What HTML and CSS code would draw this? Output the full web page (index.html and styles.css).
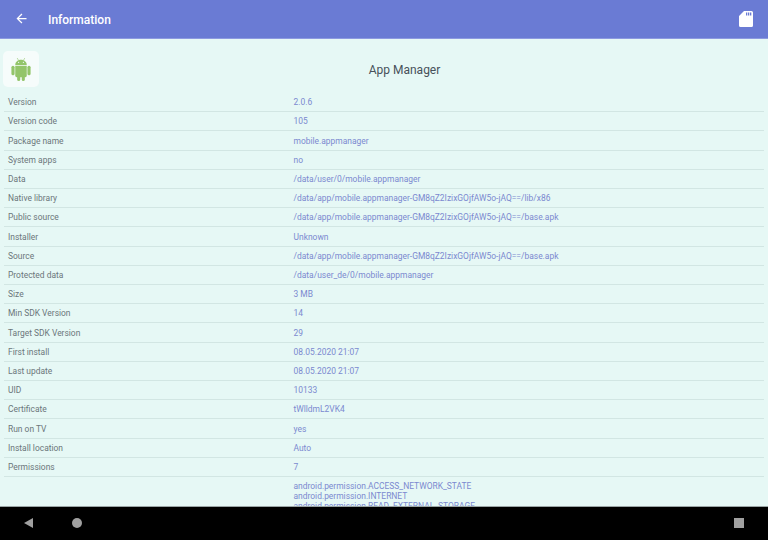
FILE: index.html
```html
<!DOCTYPE html>
<html lang="en">
<head>
<meta charset="utf-8">
<title>Information</title>
<link rel="stylesheet" href="styles.css">
</head>
<body>
<div class="screen">
  <header class="appbar">
    <svg class="back" viewBox="0 0 24 24" width="15" height="15"><path d="M20 11H7.830l5.590-5.590L12 4l-8 8 8 8 1.410-1.410L7.830 13H20z" fill="#fff"/></svg>
    <h1 class="title">Information</h1>
    <svg class="sd" viewBox="0 0 14 18" width="14" height="18"><path d="M5 1h7.500A1.500 1.500 0 0 1 14 2.500v13a1.500 1.500 0 0 1-1.500 1.500h-11A1.500 1.500 0 0 1 0 15.500V6z" fill="#fff"/><path d="M7 2.500h1.300v3H7zM9 2.500h1.300v3H9zM11 2.500h1.300v3H11z" fill="#6a7bd4"/></svg>
  </header>
  <main class="content">
    <div class="app-head">
      <div class="icon-box">
        <svg viewBox="0 0 20 24" width="20" height="24"><g fill="#93c56a"><rect x="0" y="8" width="3.300" height="10" rx="1.600"/><rect x="16.700" y="8" width="3.300" height="10" rx="1.600"/><path d="M4 8h12v10.500a1.500 1.500 0 0 1-1.500 1.500H5.500A1.500 1.500 0 0 1 4 18.500z"/><rect x="6" y="18" width="3.200" height="6" rx="1.600"/><rect x="10.800" y="18" width="3.200" height="6" rx="1.600"/><path d="M4 7.200C4 4 6.800 1.800 10 1.800s6 2.200 6 5.400z"/><path d="M6 0l1.800 3M14 0l-1.800 3" stroke="#93c56a" stroke-width=".6"/></g><circle cx="7.500" cy="4.600" r=".6" fill="#e6f8f5"/><circle cx="12.500" cy="4.600" r=".6" fill="#e6f8f5"/></svg>
      </div>
      <div class="app-name">App Manager</div>
    </div>
    <div class="row"><span class="key">Version</span><span class="val">2.0.6</span></div>
    <div class="row"><span class="key">Version code</span><span class="val">105</span></div>
    <div class="row"><span class="key">Package name</span><span class="val">mobile.appmanager</span></div>
    <div class="row"><span class="key">System apps</span><span class="val">no</span></div>
    <div class="row"><span class="key">Data</span><span class="val">/data/user/0/mobile.appmanager</span></div>
    <div class="row"><span class="key">Native library</span><span class="val">/data/app/mobile.appmanager-GM8qZ2IzixGOjfAW5o-jAQ==/lib/x86</span></div>
    <div class="row"><span class="key">Public source</span><span class="val">/data/app/mobile.appmanager-GM8qZ2IzixGOjfAW5o-jAQ==/base.apk</span></div>
    <div class="row"><span class="key">Installer</span><span class="val">Unknown</span></div>
    <div class="row"><span class="key">Source</span><span class="val">/data/app/mobile.appmanager-GM8qZ2IzixGOjfAW5o-jAQ==/base.apk</span></div>
    <div class="row"><span class="key">Protected data</span><span class="val">/data/user_de/0/mobile.appmanager</span></div>
    <div class="row"><span class="key">Size</span><span class="val">3 MB</span></div>
    <div class="row"><span class="key">Min SDK Version</span><span class="val">14</span></div>
    <div class="row"><span class="key">Target SDK Version</span><span class="val">29</span></div>
    <div class="row"><span class="key">First install</span><span class="val">08.05.2020 21:07</span></div>
    <div class="row"><span class="key">Last update</span><span class="val">08.05.2020 21:07</span></div>
    <div class="row"><span class="key">UID</span><span class="val">10133</span></div>
    <div class="row"><span class="key">Certificate</span><span class="val">tWlldmL2VK4</span></div>
    <div class="row"><span class="key">Run on TV</span><span class="val">yes</span></div>
    <div class="row"><span class="key">Install location</span><span class="val">Auto</span></div>
    <div class="row"><span class="key">Permissions</span><span class="val">7</span></div>
    <div class="perm-list">
      <span class="val">android.permission.ACCESS_NETWORK_STATE</span>
      <span class="val">android.permission.INTERNET</span>
      <span class="val">android.permission.READ_EXTERNAL_STORAGE</span>
    </div>
  </main>
  <footer class="navbar">
    <span class="nav-back"></span>
    <span class="nav-home"></span>
    <span class="nav-recent"></span>
  </footer>
</div>
</body>
</html>
```
FILE: styles.css
```css
* { box-sizing: border-box; }
html, body { margin: 0; padding: 0; }
body { font-family: Roboto, "Liberation Sans", sans-serif; }
.screen {
  width: 768px;
  height: 540px;
  display: flex;
  flex-direction: column;
  overflow: hidden;
  background: #e6f8f5;
}
.appbar {
  flex: 0 0 39px;
  display: flex;
  align-items: center;
  background: #6a7bd4;
  border-bottom: 1px solid #8d9ae0;
  padding: 0 15px 0 14px;
}
.back { flex: none; margin-top: -1px; }
.title {
  margin: 1px 0 0 19px;
  font-size: 12px;
  font-weight: 500;
  color: #fff;
  flex: 1;
}
.sd { flex: none; margin-top: -1px; }
.content {
  flex: 1;
  min-height: 0;
  overflow: hidden;
  padding: 12px 4px 0 4px;
}
.app-head {
  display: flex;
  align-items: center;
  height: 36px;
  margin-left: -1px;
  margin-bottom: 6px;
}
.icon-box {
  width: 36px;
  height: 36px;
  border-radius: 5px;
  background: #f6fcfb;
  display: flex;
  align-items: center;
  justify-content: center;
  flex: none;
}
.icon-box svg { width: 20px; height: 23px; }
.app-name {
  flex: 1;
  text-align: center;
  font-size: 12px;
  color: #47515a;
  padding: 1px 0 0 6px;
}
.row {
  display: grid;
  grid-template-columns: 285.500px 1fr;
  align-items: center;
  height: 19.210px;
  padding-left: 4px;
  border-bottom: 1px solid #d2e6e3;
  font-size: 8.450px;
}
.key { color: #6b767a; }
.val { color: #7b89d0; font-size: 8.450px; }
.perm-list {
  display: flex;
  flex-direction: column;
  padding: 4px 0 0 285.500px;
  line-height: 10px;
  margin-left: 4px;
}
.navbar {
  flex: 0 0 34px;
  position: relative;
  background: #000;
  border-top: 1px solid #9aa5a5;
}
.nav-back {
  position: absolute;
  left: 24px;
  top: 11px;
  width: 0;
  height: 0;
  border-top: 5px solid transparent;
  border-bottom: 5px solid transparent;
  border-right: 9px solid #a0a0a0;
}
.nav-home {
  position: absolute;
  left: 72px;
  top: 11px;
  width: 10px;
  height: 10px;
  border-radius: 50%;
  background: #a0a0a0;
}
.nav-recent {
  position: absolute;
  left: 734px;
  top: 11px;
  width: 10px;
  height: 10px;
  background: #a0a0a0;
}
```
